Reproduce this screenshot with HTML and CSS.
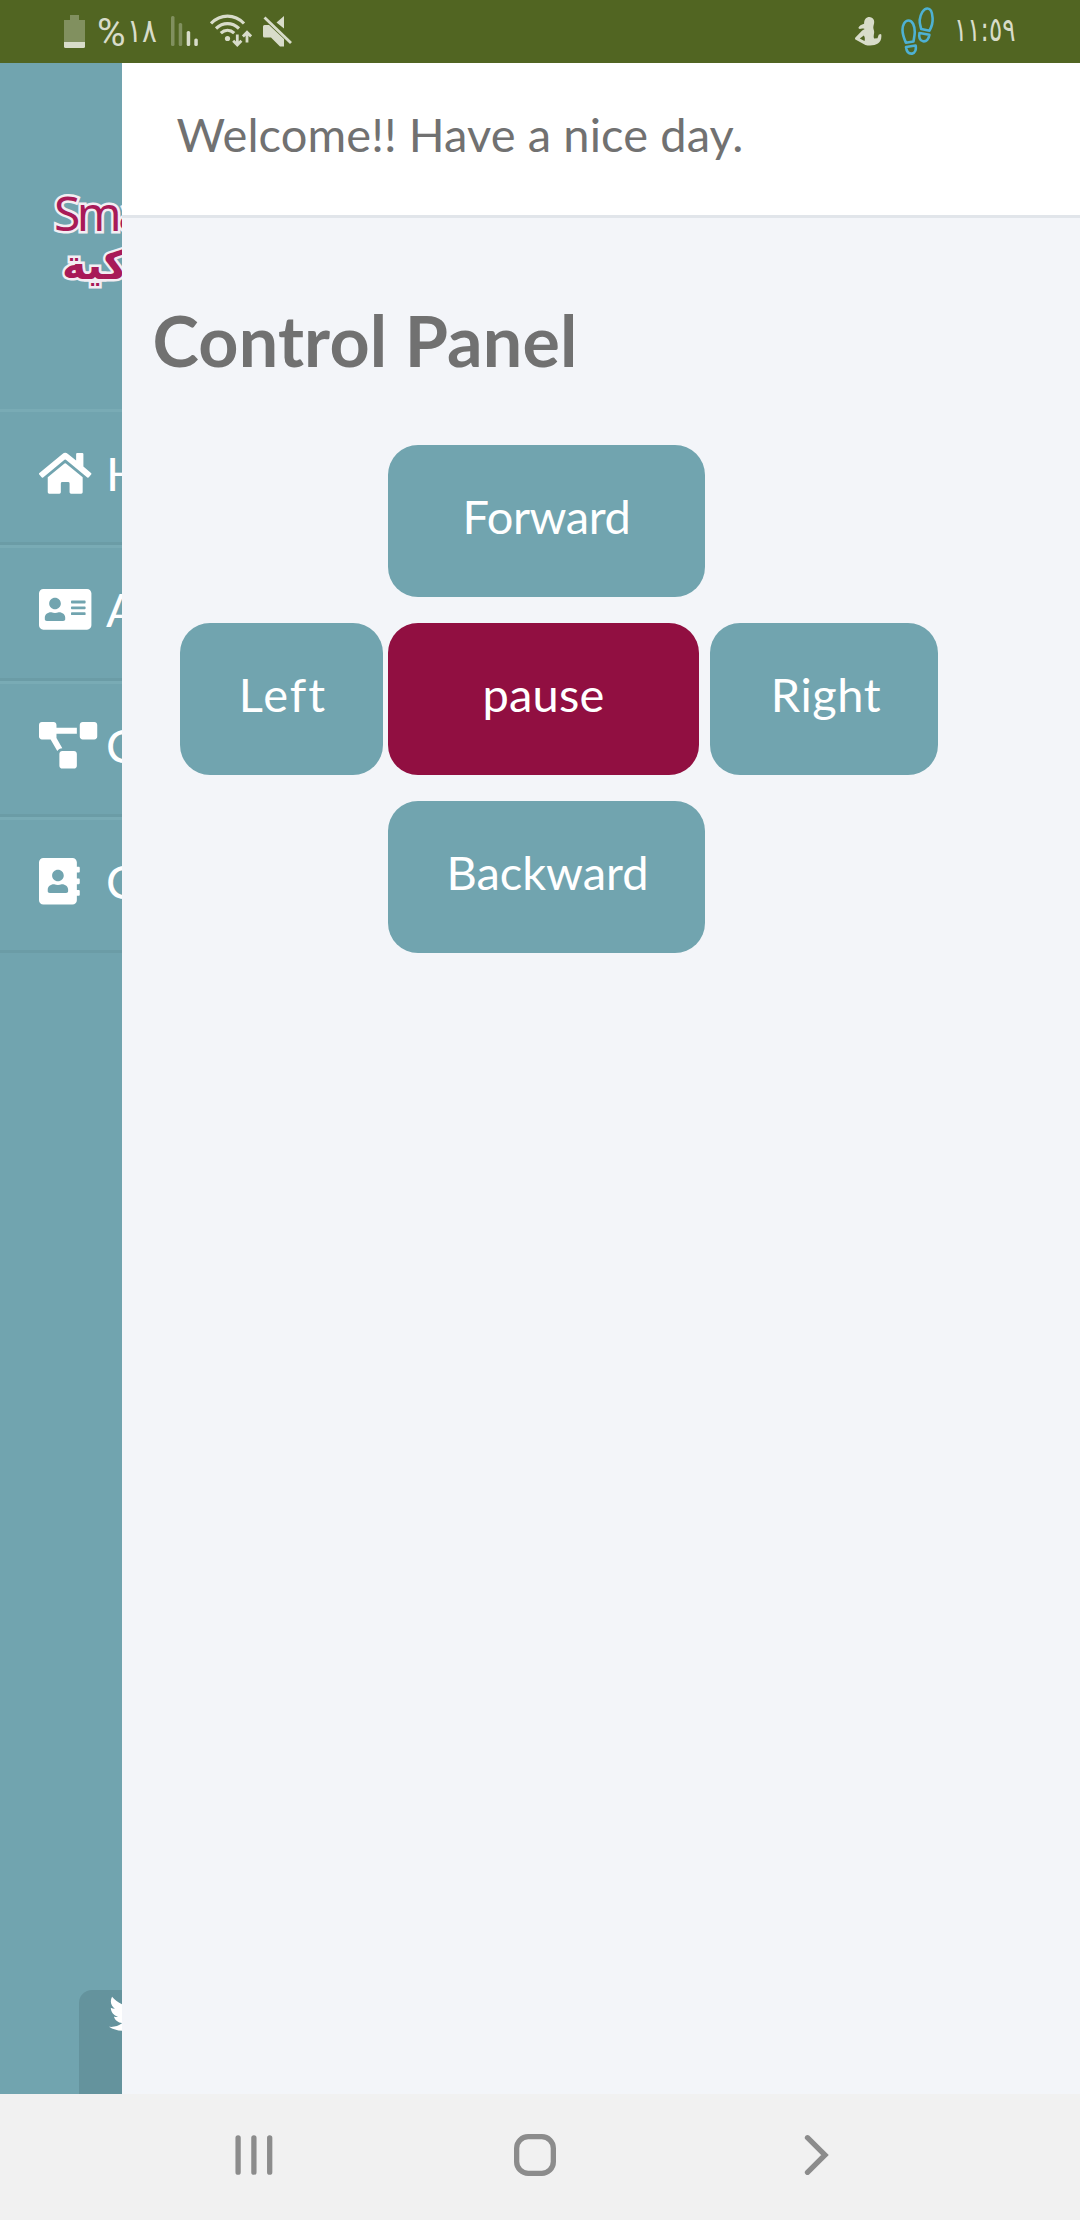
FILE: index.html
```
<!DOCTYPE html>
<html lang="en">
<head>
<meta charset="utf-8">
<title>Control Panel</title>
<link rel="stylesheet" href="styles.css">
</head>
<body>
<div class="statusbar">
  <div class="status-left">
    <svg class="icon-battery" width="21" height="34" viewBox="0 0 21 34"><path class="dim" d="M6 0h9v5h6v22H0V5h6z"/><path d="M0 27h21v4.500a1.500 1.500 0 0 1-1.500 1.500h-18A1.500 1.500 0 0 1 0 31.500z"/></svg>
    <span class="percent">%</span><span class="level">١٨</span>
    <svg class="icon-signal" width="28" height="32" viewBox="0 0 28 32"><rect class="dim" width="3.500" height="30" y="1" rx="1.500"/><rect class="dim" x="7.700" y="8" width="3.500" height="23" rx="1.500"/><rect x="15.700" y="16" width="3.500" height="15" rx="1.500"/><rect x="23.300" y="23.500" width="3.500" height="7.500" rx="1.500"/></svg>
    <svg class="icon-wifi" width="42" height="34" viewBox="0 0 42 34"><g fill="none" stroke="#d8dcca" stroke-width="3.200"><path d="M1 9.500C10.500-.3 24.500-.3 34 9.500"/><path d="M6 14.500c7-6.500 16-6.500 23 0"/><path d="M10.800 19.200c4-3.800 9.400-3.800 13.400 0"/><path d="M27.300 20.500V31M23.200 26.800l4.100 4.200 4.100-4.200M37 28.500V18.200M32.900 22.400l4.100-4.200 4.100 4.200" stroke-width="2.800"/></g><circle cx="17.500" cy="24.500" r="2.600"/></svg>
    <svg class="icon-mute" width="30" height="32" viewBox="0 0 30 32"><path d="M0 11.500a1.500 1.500 0 0 1 1.500-1.500H6L21 24v7.500h-4L8 22.500H1.500A1.500 1.500 0 0 1 0 21zM21 1v12.500L13.500 7.500z"/><path d="M1.500 2.500l26.500 25.500" fill="none" stroke="#d8dcca" stroke-width="2.800"/></svg>
  </div>
  <div class="status-right">
    <svg class="icon-person" width="27" height="32" viewBox="0 0 27 32"><path fill-rule="evenodd" d="M14.500 1a4.800 4.800 0 0 1 4.700 5c0 2.300-.8 3.400-.9 5.500 0 1.800 1.200 3 .8 5.500-.3 2.300-.8 3.800 0 5.500l3.400-.2 1.200-3.600 1.600-.6 1 .5c.5 4.500-1 7.400-3.400 9-2.800 2-9 2.200-12.500 1.300L.4 23.600c-.6-.5-.5-1.500 0-2.100l6.800-7 2.500-1.400c-2.100-.8-3.300-.5-5 0L3.300 12c1-2 3-3.600 5.800-4.200C9 3.800 11 1 14.500 1zM8.800 19.600l-4 3 4.700 2.500c.6-2 .5-4-.7-5.500z"/></svg>
    <svg class="icon-steps" width="34" height="48" viewBox="0 0 34 48"><g fill="none" stroke="#4eb1d3" stroke-width="2.600" stroke-linejoin="round"><path d="M7.500 13.500c4.200 0 6.300 5.700 6.300 11.500-.1 3.300-.8 6.500-1.300 9.500l-7.600 1.200C3.300 32 1.500 28 1.500 23c0-5 2.200-9.500 6-9.500z"/><path d="M5 40l9.600-1.500c.8 4-.4 7.600-3.500 8.100C7.500 47 5.500 44 5 40z"/><path d="M26.500 1.500c-4.200 0-7.200 6-7.800 11.500-.3 3.300.8 6 1.500 9l8.300 1.700C30.500 20 32 16 31.600 11c-.3-5-1.800-9.500-5.100-9.500z"/><path d="M18.500 26l9.900 1.800c-.6 4.200-3 7-6.300 6.500-3.300-.6-4.500-4.200-3.600-8.300z"/></g></svg>
    <span class="clock">١١:٥٩</span>
  </div>
</div>

<div class="app">
  <aside class="sidebar">
    <div class="logo">
      <div class="logo-latin">Smart</div>
      <div class="logo-arabic">الذكية</div>
    </div>
    <nav class="menu">
      <a class="menu-item"><span class="menu-icon"><svg height="46.600" viewBox="0 0 576 512"><path d="M280.370 148.260L96 300.110V464a16 16 0 0 0 16 16l112.060-.29a16 16 0 0 0 15.920-16V368a16 16 0 0 1 16-16h64a16 16 0 0 1 16 16v95.640a16 16 0 0 0 16 16.050L464 480a16 16 0 0 0 16-16V300L295.670 148.260a12.190 12.190 0 0 0-15.300 0zM571.600 251.470L488 182.560V44.050a12 12 0 0 0-12-12h-56a12 12 0 0 0-12 12v72.610L318.470 43a48 48 0 0 0-61 0L4.340 251.470a12 12 0 0 0-1.600 16.900l25.500 31A12 12 0 0 0 45.150 301l235.220-193.740a12.190 12.190 0 0 1 15.300 0L530.900 301a12 12 0 0 0 16.900-1.600l25.500-31a12 12 0 0 0-1.700-16.930z"/></svg></span><span>Home</span></a>
      <a class="menu-item"><span class="menu-icon"><svg height="46.600" viewBox="0 0 576 512"><path d="M528 32H48C21.500 32 0 53.500 0 80v352c0 26.500 21.500 48 48 48h480c26.500 0 48-21.500 48-48V80c0-26.500-21.500-48-48-48zm-352 96c35.300 0 64 28.700 64 64s-28.700 64-64 64-64-28.700-64-64 28.700-64 64-64zm112 236.800c0 10.600-10 19.200-22.400 19.200H86.400C74 384 64 375.400 64 364.800v-19.200c0-31.800 30.100-57.600 67.200-57.600h5c12.300 5.100 25.700 8 39.800 8s27.600-2.900 39.800-8h5c37.100 0 67.200 25.800 67.200 57.600v19.200zM512 312c0 4.400-3.600 8-8 8H360c-4.400 0-8-3.600-8-8v-16c0-4.400 3.600-8 8-8h144c4.400 0 8 3.600 8 8v16zm0-64c0 4.400-3.600 8-8 8H360c-4.400 0-8-3.600-8-8v-16c0-4.400 3.600-8 8-8h144c4.400 0 8 3.600 8 8v16zm0-64c0 4.400-3.600 8-8 8H360c-4.400 0-8-3.600-8-8v-16c0-4.400 3.600-8 8-8h144c4.400 0 8 3.600 8 8v16z"/></svg></span><span>About</span></a>
      <a class="menu-item"><span class="menu-icon"><svg height="46.600" viewBox="0 0 640 512"><path d="M384 320H256c-17.670 0-32 14.330-32 32v128c0 17.670 14.330 32 32 32h128c17.670 0 32-14.330 32-32V352c0-17.670-14.330-32-32-32zM192 32c0-17.670-14.330-32-32-32H32C14.330 0 0 14.330 0 32v128c0 17.670 14.330 32 32 32h95.720l73.160 128.040C211.980 300.980 232.400 288 256 288h.28L192 175.510V128h224V64H192V32zM608 0H480c-17.670 0-32 14.330-32 32v128c0 17.670 14.330 32 32 32h128c17.670 0 32-14.330 32-32V32c0-17.670-14.330-32-32-32z"/></svg></span><span>Control</span></a>
      <a class="menu-item"><span class="menu-icon"><svg height="46.600" viewBox="0 0 448 512"><path d="M436 160c6.600 0 12-5.400 12-12v-40c0-6.600-5.400-12-12-12h-20V48c0-26.500-21.500-48-48-48H48C21.500 0 0 21.500 0 48v416c0 26.500 21.500 48 48 48h320c26.500 0 48-21.500 48-48v-48h20c6.600 0 12-5.400 12-12v-40c0-6.600-5.400-12-12-12h-20v-64h20c6.600 0 12-5.400 12-12v-40c0-6.600-5.400-12-12-12h-20v-64h20zm-228-32c35.300 0 64 28.700 64 64s-28.700 64-64 64-64-28.700-64-64 28.700-64 64-64zm112 236.800c0 10.600-10 19.200-22.400 19.200H118.400C106 384 96 375.400 96 364.800v-19.200c0-31.800 30.100-57.600 67.200-57.600h5c12.300 5.100 25.700 8 39.800 8s27.600-2.900 39.800-8h5c37.100 0 67.200 25.800 67.200 57.600v19.200z"/></svg></span><span>Contact</span></a>
    </nav>
    <div class="social">
      <svg width="44" height="44" viewBox="0 0 512 512"><path d="M459.370 151.716c.325 4.548.325 9.097.325 13.645 0 138.720-105.583 298.558-298.558 298.558-59.452 0-114.680-17.219-161.137-47.106 8.447.974 16.568 1.299 25.340 1.299 49.055 0 94.213-16.568 130.274-44.832-46.132-.975-84.792-31.188-98.112-72.772 6.498.974 12.995 1.624 19.818 1.624 9.421 0 18.843-1.300 27.614-3.573-48.081-9.747-84.143-51.980-84.143-102.985v-1.299c13.969 7.797 30.214 12.670 47.431 13.319-28.264-18.843-46.781-51.005-46.781-87.391 0-19.492 5.197-37.360 14.294-52.954 51.655 63.675 129.300 105.258 216.365 109.807-1.624-7.797-2.599-15.918-2.599-24.040 0-57.828 46.782-104.934 104.934-104.934 30.213 0 57.502 12.670 76.670 33.137 23.715-4.548 46.456-13.320 66.599-25.340-7.798 24.366-24.366 44.833-46.132 57.827 21.117-2.273 41.584-8.122 60.426-16.243-14.292 20.791-32.161 39.308-52.628 54.253z"/></svg>
    </div>
  </aside>
  <main class="content">
    <header class="welcome">Welcome!! Have a nice day.</header>
    <h1 class="title">Control Panel</h1>
    <div class="pad">
      <button class="key forward">Forward</button>
      <button class="key left">Left</button>
      <button class="key pause">pause</button>
      <button class="key right">Right</button>
      <button class="key backward">Backward</button>
    </div>
  </main>
</div>

<div class="navbar">
  <svg class="nav-recents" width="38" height="42" viewBox="0 0 38 42"><path d="M3.100 3.800v34.400M18.900 3.800v34.400M34.700 3.800v34.400"/></svg>
  <svg class="nav-home" width="42" height="42" viewBox="0 0 42 42"><rect x="2.650" y="2.650" width="36.700" height="36.700" rx="11.500"/></svg>
  <svg class="nav-back" width="25" height="42" viewBox="0 0 25 42"><path d="M3.500 3.700L21 21 3.500 38.300"/></svg>
</div>
</body>
</html>
```
FILE: styles.css
```
* { box-sizing: border-box; }
body {
  margin: 0;
  height: 2220px;
  display: flex;
  flex-direction: column;
  overflow: hidden;
  background: #f3f5f9;
  color: #717171;
  font-family: Lato, sans-serif;
}
svg { display: block; flex: none; }

/* Status bar */
.statusbar {
  height: 63px;
  flex: none;
  display: flex;
  justify-content: space-between;
  background: #516522;
  color: #d8dcca;
  padding: 0 64px 0 64px;
}
.statusbar svg { fill: #d8dcca; }
.statusbar .dim { fill: #81905f; }
.status-left, .status-right { display: flex; align-items: flex-start; }
.icon-battery { margin-top: 15px; }
.percent {
  margin: 10px 0 0 12px;
  width: 30px;
  font: 39px/46px Roboto, sans-serif;
}
.level {
  margin-top: 11px;
  width: 43px;
  font: 33px/39px "DejaVu Sans", sans-serif;
  transform: scaleX(.84);
  transform-origin: 0 0;
}
.icon-signal { margin-top: 15px; margin-left: 1px; }
.icon-wifi { margin: 14px 0 0 11px; }
.icon-mute { margin: 15px 0 0 11px; }
.icon-person { margin-top: 16px; }
.icon-steps { margin: 7px 0 0 19px; }
.clock {
  margin: 11px 0 0 19px;
  width: 62px;
  font: 33px/38px "DejaVu Sans", sans-serif;
  transform: scaleX(.75);
  transform-origin: 0 0;
  white-space: nowrap;
}

/* Body */
.app { flex: 1; display: flex; min-height: 0; }
.sidebar {
  width: 122px;
  flex: none;
  overflow: hidden;
  display: flex;
  flex-direction: column;
  background: #71a4af;
  color: #fff;
}
.sidebar svg { fill: #fff; }
.logo {
  height: 346px;
  flex: none;
  padding-top: 118px;
  color: #a81a58;
  white-space: nowrap;
  -webkit-text-stroke: 5px #f3eef3;
  paint-order: stroke fill;
}
.logo-latin {
  padding-left: 54px;
  font: 48px/64px "Noto Sans", sans-serif;
  letter-spacing: -3.500px;
}
.logo-arabic {
  padding-left: 62px;
  font: bold 41px/40px "DejaVu Sans", sans-serif;
}
.menu-item {
  height: 136px;
  display: flex;
  padding-left: 39.3px;
  border-top: 3px solid #79abb5;
  border-bottom: 3px solid #6b9ca6;
  font-size: 47px;
  line-height: 123px;
  white-space: nowrap;
}
.menu-icon { width: 66.700px; flex: none; padding-top: 38.200px; }
.social {
  margin: auto 0 0 79px;
  width: 300px;
  height: 104px;
  padding: 1.400px 0 0 29.700px;
  border-radius: 13px 13px 0 0;
  background: #64939d;
}

.content { flex: 1; min-width: 0; }
.welcome {
  height: 155px;
  padding-left: 54.400px;
  background: #fff;
  border-bottom: 3px solid #e1e5ea;
  font-size: 47px;
  line-height: 142px;
  letter-spacing: .1px;
}
.title {
  margin: 80px 0 63px 30.500px;
  font-size: 70px;
  line-height: 84px;
  letter-spacing: .2px;
}
.pad {
  display: grid;
  grid-template-columns: 208px 322px 228px;
  grid-template-rows: repeat(3, 152px);
  row-gap: 26px;
  margin-left: 58px;
}
.key {
  border: 0;
  border-radius: 30px;
  padding: 0 0 10px;
  background: #71a4af;
  color: #fff;
  font: 47px/142px Lato, sans-serif;
}
.forward { grid-area: 1 / 2; width: 317px; letter-spacing: -.4px; }
.left { grid-area: 2 / 1; width: 203px; padding-left: 3px; letter-spacing: 2px; }
.pause { grid-area: 2 / 2; width: 311px; background: #910f41; letter-spacing: .2px; }
.right { grid-area: 2 / 3; width: 228px; padding-left: 4px; letter-spacing: .6px; }
.backward { grid-area: 3 / 2; width: 317px; padding-left: 2px; }

/* Bottom navigation */
.navbar {
  height: 126px;
  flex: none;
  display: flex;
  padding: 40px 0 0 235px;
  background: #f1f1f1;
}
.nav-home { margin-left: 241px; }
.nav-back { margin-left: 248px; }
.navbar svg { fill: none; stroke: #8c8c8c; stroke-width: 5.300; stroke-linecap: round; stroke-linejoin: miter; }
```
